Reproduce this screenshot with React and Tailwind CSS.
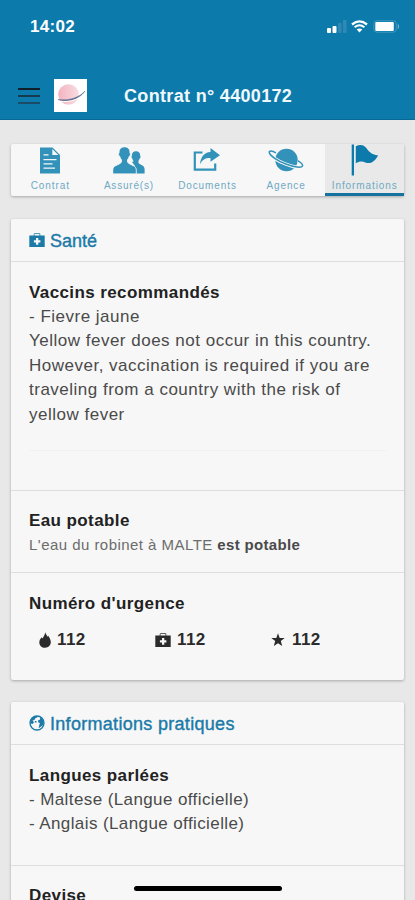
import React from "react";

function MedKit({ className }) {
  return (
    <svg viewBox="0 0 16 14" className={className} fill="currentColor">
      <path d="M4.600 3.400V1.800Q4.600.1 5.900.1h4.200q1.300 0 1.300 1.300v2h-1V1.600q0-.5-.5-.5H6.100q-.5 0-.5.5v1.800z" opacity=".75" />
      <path fillRule="evenodd" d="M.3 2.500h15.400V14H.3zM7 5v2.200H4.900v2.400H7v2.200h2.300V9.600h2.100V7.200H9.300V5z" />
    </svg>
  );
}

function Flame({ className }) {
  return (
    <svg viewBox="0 0 12 16" className={className} fill="currentColor">
      <path d="M6.200.3c.8 2.300 1.600 3.200 2.500 4.400l.5-.9C10.600 5.800 11.800 8 11.800 10.100c0 3.300-2.300 5.600-5.700 5.600S.3 13.400.3 10.400c0-2 1-3.600 2.400-5.100l.7 1.300C4.600 4.800 5.800 3.200 6.200.3z" />
    </svg>
  );
}

function Star({ className }) {
  return (
    <svg viewBox="0 0 14 14" className={className} fill="currentColor">
      <path d="M7 .3l1.700 4.600 5 .2-3.900 3 1.400 4.900L7 10.200 2.800 13l1.400-4.900-3.900-3 5-.2z" />
    </svg>
  );
}

function Globe({ className }) {
  return (
    <svg viewBox="0 0 16 16" className={className}>
      <circle cx="8" cy="8" r="7" fill="none" stroke="currentColor" strokeWidth="1.300" />
      <path fill="currentColor" d="M1.200 6.500C1.900 3.500 4 1.500 8 1.100L8.600 2.300 6.300 3.300 5.400 5.100 3.500 5.600 5 7.200 3.600 8.900 1.200 8.500zM5.800 5.900h1.700v1.600H5.800zM9 5.600l2.100-1L11 2.300l2.500 1.500 1.400 3.500-.9 2.600-2.200 1.900-2.200 1.400.7-3.400L11 8.100 9.300 7.600z" />
    </svg>
  );
}

function DocIcon() {
  return (
    <svg viewBox="0 0 20 27" className="h-[27px] w-5">
      <path fill="#3292b9" d="M0 .5h12.500L20 8v18.500H0z" />
      <path fill="#f7f7f7" d="M12.300 2v5.900h6zM3.500 7.300h5v1.200h-5zM3.500 12h13v1.200h-13zM3.500 16.300h9v1.200h-9zM3.500 20.500h11.500v1.200H3.500z" />
    </svg>
  );
}

function PeopleIcon() {
  return (
    <svg viewBox="0 0 32 27" className="h-[27px] w-8" fill="#3292b9">
      <path d="M23 4.200c2.800 0 4.400 2 4.200 4.700.7.500.4 1.900-.4 2.400-.2 1-.7 1.800-1.300 2.400-.3 1.700 0 2.700 1.200 3.300l2.700 1.400c1.600.8 2.200 2.200 2.200 4.200v4H22V19l-3-4 1.700-.7c-.8-.8-1.200-1.800-1.400-3-.8-.5-1.100-1.900-.4-2.400-.2-2.700 1.300-4.700 4.100-4.700z" />
      <path stroke="#f7f7f7" strokeWidth=".9" d="M11.500-.2c3.700 0 5.700 2.700 5.500 6.300.9.500.6 2.500-.7 3.200-.3 1.400-.9 2.500-1.700 3.300-.3 2 .1 3.300 1.700 4.100l4.100 2c2 1 2.900 2.500 2.900 4.700v3.500H-.3v-3.500c0-2.200.9-3.700 2.900-4.700l4.100-2c1.600-.8 2-2.100 1.700-4.100-.8-.8-1.400-1.900-1.700-3.300C5.400 8.600 5.100 6.600 6 6.100 5.800 2.500 7.800-.2 11.500-.2z" />
    </svg>
  );
}

function ShareIcon() {
  return (
    <svg viewBox="0 0 28 24" className="h-6 w-7">
      <path fill="none" stroke="#3292b9" strokeWidth="2.200" d="M9.500 4.500H1.800v17.200h20.400V15.500" />
      <path fill="#3292b9" d="M17.500 0L27 7.200l-9.500 6.600V10C12.500 9.800 9.600 11.500 7 16.200 7.500 9.300 11 4.300 17.500 4z" />
    </svg>
  );
}

function PlanetIcon() {
  return (
    <svg viewBox="0 0 36 25" className="h-[25px] w-9">
      <circle cx="18.500" cy="12" r="11.200" fill="#3292b9" />
      <path d="M7.500 4.800C3.400 2.600.6 2.500 1 4.500c.7 3.300 8.300 8.400 16.500 11.500 8.600 3.300 16 4.300 17 2 .6-1.300-1.200-3.300-4.700-5.500" fill="none" stroke="#f7f7f7" strokeWidth="3.400" />
      <path d="M8 4.800C3.800 2.500.9 2.600 1.300 4.500c.7 3.300 8.300 8.400 16.500 11.500 8.600 3.300 15.900 4.200 16.700 2 .5-1.300-1.400-3.300-4.900-5.300" fill="none" stroke="#3292b9" strokeWidth="1.500" />
    </svg>
  );
}

function FlagIcon() {
  return (
    <svg viewBox="0 0 28 32" className="h-8 w-7" fill="#0c7bab">
      <path d="M.7.500h2.300v31H.7z" />
      <path d="M4.800 2.200c3.700-1.800 7.400-1.700 10.100 1.300 2.500 3 4.800 7.300 12.300 7.900-3.800 6.600-8 8.700-12.300 7.300-3.600-1.700-6.500-1.400-10.100.5z" />
    </svg>
  );
}

function Tab({ icon, label, spacing, active }) {
  return (
    <div className={"flex w-[78.600px] shrink-0 flex-col items-center " + (active ? "bg-[#e9e9e9] border-b-[3px] border-[#1673a0]" : "")}>
      <div className="flex h-[35px] w-full items-center justify-center pb-[3px]">{icon}</div>
      <div className={"text-[10px] leading-[14px] whitespace-nowrap text-[#6fa9c3] " + spacing}>{label}</div>
    </div>
  );
}

const card = "flex shrink-0 flex-col rounded-[2px] bg-[#f7f7f7] shadow-[0_1px_3px_rgba(0,0,0,0.28)]";
const heading = "text-[17px] leading-6 font-bold text-[#222222] whitespace-nowrap tracking-[0.400px]";
const body = "text-[17px] leading-[24.400px] whitespace-nowrap text-[#4a4a4a]";

export default function App() {
  return (
    <div className="relative flex h-[900px] w-[415px] flex-col overflow-hidden bg-[#e8e8e8] font-['Liberation_Sans',Arial,sans-serif]">
      <header className="flex h-[120px] shrink-0 flex-col border-b border-[#086898] bg-[#0c7bab] text-white">
        <div className="flex h-[52px] items-center justify-between pr-[14px] pl-[30px]">
          <div className="pt-px text-[17px] font-bold tracking-[0.300px]">14:02</div>
          <div className="flex items-center">
            <svg viewBox="0 0 20 13" className="h-[13px] w-5">
              <rect x="0" y="8" width="4" height="5" rx="1" fill="#fff" />
              <rect x="5.500" y="6" width="4" height="7" rx="1" fill="#fff" />
              <rect x="11" y="3" width="3.500" height="10" rx="1" fill="#3089b4" />
              <rect x="16" y="0" width="3.500" height="13" rx="1" fill="#3089b4" />
            </svg>
            <svg viewBox="0 0 17 13" className="ml-[4px] h-[13px] w-[17px]" fill="none" stroke="#fff">
              <path d="M1 4.500q7.500-6.200 15 0" strokeWidth="2.300" />
              <path d="M3.600 7.300q4.900-4 9.800 0" strokeWidth="2" />
              <path d="M5.700 9.500q2.800-2 5.600 0L8.500 12.500z" fill="#fff" stroke="none" />
            </svg>
            <svg viewBox="0 0 28 13" className="ml-[5px] h-[13px] w-7">
              <rect x=".8" y=".8" width="22.500" height="11.400" rx="3" fill="none" stroke="#3f97be" />
              <rect x="2.300" y="2" width="18.500" height="9" rx="1" fill="#fff" />
              <path d="M24.800 3.500q2.500 3 0 6z" fill="#79b8d2" />
            </svg>
          </div>
        </div>
        <div className="flex h-[67px] items-center pt-[20px] pl-[18px]">
          <div className="flex w-[22px] flex-col gap-[5px]">
            <div className="h-[2px] bg-[#10202b]" />
            <div className="h-[2px] bg-[#163b4f]" />
            <div className="h-[2px] bg-[#1b4d68]" />
          </div>
          <svg viewBox="0 0 33 33" className="relative -top-[0.500px] ml-[14px] h-[33px] w-[33px]">
            <defs>
              <linearGradient id="sphere" x1="0" y1="0" x2="1" y2="0">
                <stop offset="0" stopColor="#f3b3c0" />
                <stop offset="1" stopColor="#f9dce2" />
              </linearGradient>
            </defs>
            <rect width="33" height="33" fill="#fff" />
            <circle cx="14.500" cy="15.500" r="10.300" fill="url(#sphere)" />
            <path d="M4 20.500c8 3 21 .8 27-8.500-5 6-15 10-27 8.500z" fill="#5a6c90" stroke="#5a6c90" strokeWidth=".5" />
            <path d="M7 22.300c7 1 14-.8 18.500-4" fill="none" stroke="#fff" strokeWidth="1" />
          </svg>
          <h1 className="ml-[37px] pt-[2px] text-[18px] font-bold tracking-[0.330px] whitespace-nowrap text-[#f0f8fc]">Contrat n° 4400172</h1>
        </div>
      </header>

      <main className="flex flex-col pt-6 pr-[11px] pl-[11px]">
        <nav className="flex h-[52px] shrink-0 rounded-[2px] bg-[#f7f7f7] shadow-[0_1px_3px_rgba(0,0,0,0.280)]">
          <Tab icon={<DocIcon />} label="Contrat" spacing="tracking-[0.900px]" />
          <Tab icon={<PeopleIcon />} label="Assuré(s)" spacing="tracking-[0.800px]" />
          <Tab icon={<ShareIcon />} label="Documents" spacing="tracking-[0.900px]" />
          <Tab icon={<PlanetIcon />} label="Agence" spacing="tracking-[0.900px]" />
          <Tab icon={<FlagIcon />} label="Informations" spacing="tracking-[0.900px]" active />
        </nav>

        <section className={"mt-[23px] h-[461px] " + card}>
          <div className="flex h-[43px] shrink-0 items-center border-b border-[#dedede] pl-[18px] text-[#1b7aa8]">
            <MedKit className="h-[14px] w-4" />
            <h2 className="ml-[5px] pt-[2px] text-[18px] leading-6 font-normal [-webkit-text-stroke:0.400px_#1b7aa8]">Santé</h2>
          </div>
          <div className="flex h-[229px] shrink-0 flex-col border-b border-[#dedede] px-[18px] pt-[19px]">
            <h3 className={heading}>Vaccins recommandés</h3>
            <div className={body + " tracking-[0.500px]"}>
              <p>- Fievre jaune</p>
              <p>Yellow fever does not occur in this country.</p>
              <p>However, vaccination is required if you are</p>
              <p>traveling from a country with the risk of</p>
              <p>yellow fever</p>
            </div>
            <div className="mt-[23px] h-px bg-[#f1f1f1]" />
          </div>
          <div className="flex h-[82px] shrink-0 flex-col border-b border-[#dedede] pt-[18px] pl-[18px]">
            <h3 className={heading}>Eau potable</h3>
            <p className="text-[15px] leading-[23px] tracking-[0.460px] whitespace-nowrap text-[#6c6c6c]">
              L'eau du robinet à MALTE <b className="tracking-[0.320px] text-[#4a4a4a]">est potable</b>
            </p>
          </div>
          <div className="flex flex-col pt-[19px] pl-[18px]">
            <h3 className={heading}>Numéro d'urgence</h3>
            <div className="mt-[12px] flex h-6 pl-[10px] text-[17px] font-bold tracking-[0.400px] text-[#2b2b2b]">
              <div className="flex w-[116px] items-center gap-[6px]"><Flame className="h-4 w-3" />112</div>
              <div className="flex w-[116px] items-center gap-[6px]"><MedKit className="h-[14px] w-4" />112</div>
              <div className="flex items-center gap-[7px]"><Star className="h-[14px] w-[14px]" />112</div>
            </div>
          </div>
        </section>

        <section className={"mt-[22px] h-[240px] " + card}>
          <div className="flex h-[43px] shrink-0 items-center border-b border-[#dedede] pl-[18px] text-[#1b7aa8]">
            <Globe className="h-4 w-4" />
            <h2 className="ml-[5px] pt-[2px] text-[18px] leading-6 font-normal tracking-[0.300px] whitespace-nowrap [-webkit-text-stroke:0.400px_#1b7aa8]">Informations pratiques</h2>
          </div>
          <div className="flex h-[121px] shrink-0 flex-col border-b border-[#dedede] pt-[19px] pl-[18px]">
            <h3 className={heading}>Langues parlées</h3>
            <div className={body + " tracking-[0.400px]"}>
              <p>- Maltese (Langue officielle)</p>
              <p>- Anglais (Langue officielle)</p>
            </div>
          </div>
          <div className="pt-[18px] pl-[18px]">
            <h3 className={heading}>Devise</h3>
          </div>
        </section>
      </main>

      <div className="absolute top-[886px] left-[134px] h-[5px] w-[148px] rounded-full bg-black" />
    </div>
  );
}
